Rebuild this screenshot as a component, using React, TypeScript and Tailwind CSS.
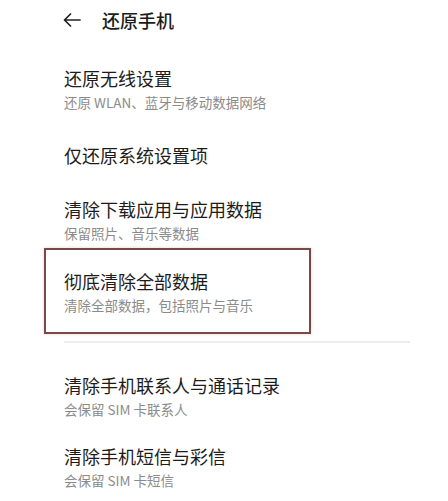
import React from 'react';

interface Item {
  title: string;
  sub?: string;
}

const font = { fontFamily: '"Noto Sans CJK SC", "Noto Sans", sans-serif' };

const Row: React.FC<Item & { className?: string }> = ({ title, sub, className = '' }) => (
  <div className={className}>
    <div className="text-[18px] leading-[24px] text-[#1c1c1c]">{title}</div>
    {sub && <div className="text-[13.5px] leading-[24px] text-[#8b8b8b]">{sub}</div>}
  </div>
);

export default function App() {
  return (
    <div className="w-[448px] h-[501px] bg-white overflow-hidden" style={font}>
      <header className="h-[40px] flex items-center pl-[63px]">
        <svg width="18" height="14" viewBox="0 0 18 14" fill="none" stroke="#222" strokeWidth="1.7" strokeLinecap="round" strokeLinejoin="round">
          <path d="M17 7H1.5M7.5 1L1.5 7l6 6" />
        </svg>
        <h1 className="ml-[21px] text-[18px] font-medium text-[#1c1c1c]">还原手机</h1>
      </header>

      <Row className="pl-[64px] pt-[26px]" title="还原无线设置" sub="还原 WLAN、蓝牙与移动数据网络" />
      <Row className="pl-[64px] pt-[29px]" title="仅还原系统设置项" />
      <Row className="pl-[64px] pt-[30px]" title="清除下载应用与应用数据" sub="保留照片、音乐等数据" />

      <div className="mt-[3px] ml-[44px] w-[267px] h-[86px] border-2 border-[#7a4845] pl-[18px] pt-[19px] shadow-[0_0_3px_rgba(190,120,120,0.35)]">
        <Row title="彻底清除全部数据" sub="清除全部数据，包括照片与音乐" />
      </div>

      <div className="mt-[7px] ml-[64px] w-[346px] h-[1.5px] bg-[#ececec]" />

      <Row className="pl-[64px] pt-[30px]" title="清除手机联系人与通话记录" sub="会保留 SIM 卡联系人" />
      <Row className="pl-[64px] pt-[23px]" title="清除手机短信与彩信" sub="会保留 SIM 卡短信" />
    </div>
  );
}
